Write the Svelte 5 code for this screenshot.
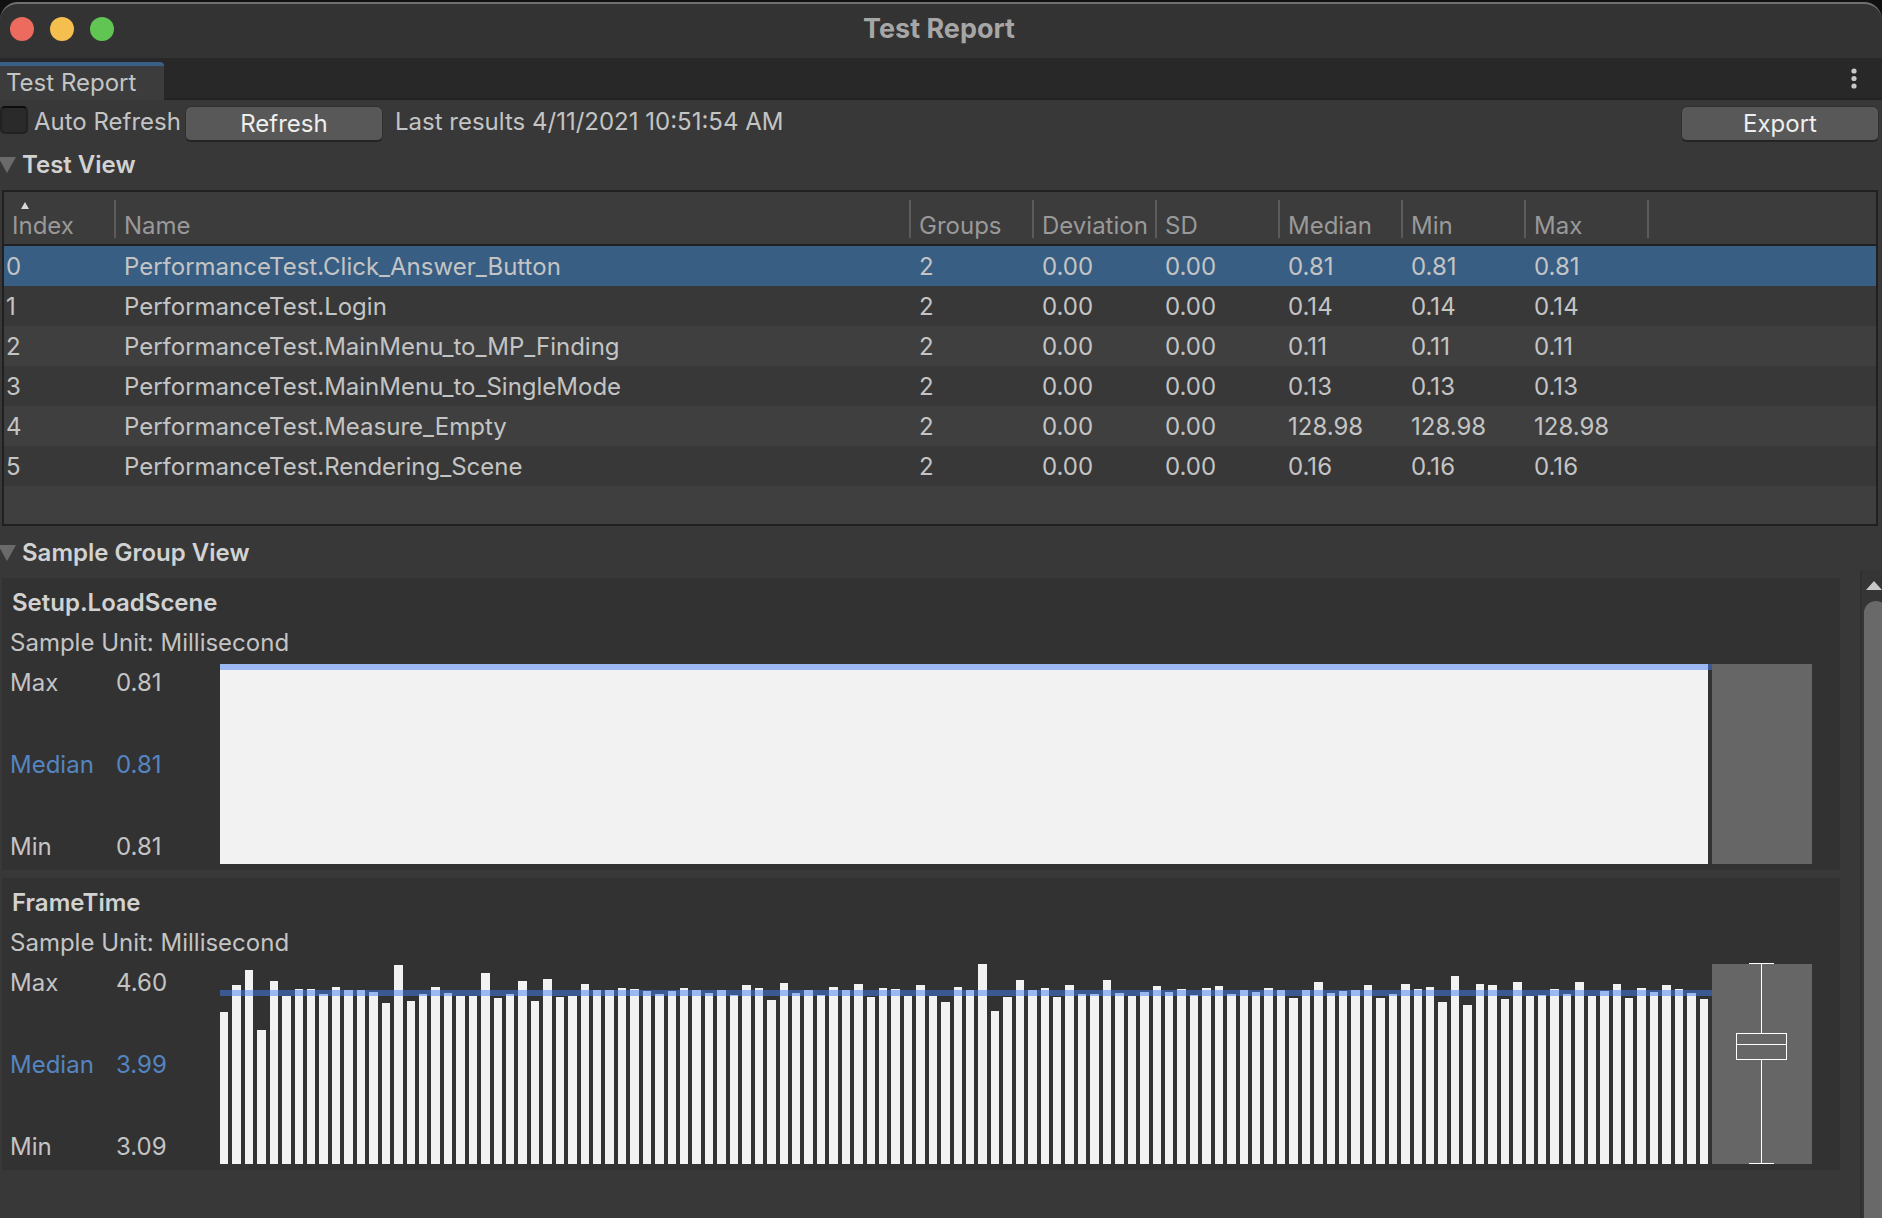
<script lang="ts">
  type Row = { name: string; groups: number; deviation: string; sd: string; median: string; min: string; max: string };

  const make = (name: string, v: string): Row => ({
    name: 'PerformanceTest.' + name, groups: 2, deviation: '0.00', sd: '0.00', median: v, min: v, max: v
  });

  const rows: Row[] = [
    make('Click_Answer_Button', '0.81'),
    make('Login', '0.14'),
    make('MainMenu_to_MP_Finding', '0.11'),
    make('MainMenu_to_SingleMode', '0.13'),
    make('Measure_Empty', '128.98'),
    make('Rendering_Scene', '0.16')
  ];

  // Bar heights of the frame time samples, out of a plot height of 200.
  const frames = [
    152, 179, 194, 134, 183, 168, 175, 175, 170, 177, 174, 174, 172, 161, 199, 163, 170, 177, 171, 168,
    168, 191, 166, 170, 183, 163, 185, 167, 168, 180, 174, 174, 176, 175, 173, 170, 173, 176, 174, 171,
    174, 169, 179, 176, 164, 181, 171, 174, 169, 177, 174, 180, 167, 176, 175, 168, 179, 168, 162, 177,
    174, 200, 153, 167, 184, 174, 176, 167, 179, 170, 170, 184, 171, 168, 172, 178, 172, 175, 169, 176,
    178, 170, 174, 172, 176, 174, 166, 174, 182, 171, 173, 174, 179, 166, 170, 180, 175, 177, 162, 188,
    159, 180, 179, 165, 182, 168, 169, 175, 170, 182, 168, 173, 180, 166, 176, 172, 179, 175, 171, 165
  ];

  const groups = [
    { name: 'Setup.LoadScene', max: '0.81', median: '0.81', min: '0.81', bars: [200], line: 0, box: false },
    { name: 'FrameTime', max: '4.60', median: '3.99', min: '3.09', bars: frames, line: 26, box: true }
  ];

  const plotWidth = 1492;

  let selected = $state(0);
  let autoRefresh = $state(false);
  let showTests = $state(true);
  let showGroups = $state(true);
</script>

<div class="window">
  <header class="titlebar">
    <div class="lights">
      <button class="light close" aria-label="Close"></button>
      <button class="light minimize" aria-label="Minimize"></button>
      <button class="light zoom" aria-label="Zoom"></button>
    </div>
    <h1>Test Report</h1>
  </header>

  <nav class="tabs">
    <button class="tab">Test Report</button>
    <button class="more" aria-label="More options">
      <svg width="6" height="22" viewBox="0 0 6 22" fill="#c8c8c8">
        <circle cx="3" cy="3" r="2.6" /><circle cx="3" cy="10.5" r="2.6" /><circle cx="3" cy="18" r="2.6" />
      </svg>
    </button>
  </nav>

  <div class="toolbar">
    <input id="auto" type="checkbox" bind:checked={autoRefresh} />
    <label for="auto">Auto Refresh</label>
    <button class="action">Refresh</button>
    <span class="results">Last results 4/11/2021 10:51:54 AM</span>
    <button class="action export">Export</button>
  </div>

  <button class="foldout" aria-expanded={showTests} onclick={() => (showTests = !showTests)}>
    <svg width="16" height="16" viewBox="0 0 16 16"><path d="M-2 0H16L7 16Z" fill="#6a6a6a" /></svg>
    Test View
  </button>

  {#if showTests}
    <div class="tests">
      <table>
        <thead>
          <tr>
            <th class="index" aria-sort="ascending">
              <div>
                <svg class="sort" width="8" height="7" viewBox="0 0 8 7"><path d="M4 0L8 7H0Z" fill="#d8d8d8" /></svg>
                Index
              </div>
            </th>
            <th><div>Name</div></th>
            {#each ['Groups', 'Deviation', 'SD', 'Median', 'Min', 'Max'] as title}
              <th class="number"><div>{title}</div></th>
            {/each}
            <th class="rest"></th>
          </tr>
        </thead>
        <tbody>
          {#each rows as row, i}
            <tr class:selected={selected === i} onclick={() => (selected = i)}>
              <td class="index">{i}</td>
              <td>{row.name}</td>
              <td>{row.groups}</td>
              <td>{row.deviation}</td>
              <td>{row.sd}</td>
              <td>{row.median}</td>
              <td>{row.min}</td>
              <td>{row.max}</td>
              <td></td>
            </tr>
          {/each}
        </tbody>
      </table>
    </div>
  {/if}

  <button class="foldout" aria-expanded={showGroups} onclick={() => (showGroups = !showGroups)}>
    <svg width="16" height="16" viewBox="0 0 16 16"><path d="M-2 0H16L7 16Z" fill="#6a6a6a" /></svg>
    Sample Group View
  </button>

  {#if showGroups}
    <div class="scroller">
      <main>
        {#each groups as group}
          {@const step = plotWidth / group.bars.length}
          <section>
            <h2>{group.name}</h2>
            <p>Sample Unit: Millisecond</p>
            <div class="sample">
              <dl>
                <div><dt>Max</dt><dd>{group.max}</dd></div>
                <div class="median"><dt>Median</dt><dd>{group.median}</dd></div>
                <div><dt>Min</dt><dd>{group.min}</dd></div>
              </dl>
              <svg class="plot" viewBox="0 0 {plotWidth} 200" preserveAspectRatio="none" shape-rendering="crispEdges">
                {#each group.bars as height, i}
                  <rect x={i * step} y={200 - height} width={step - 4} {height} fill="#f2f2f2" />
                {/each}
                <rect x="0" y={group.line} width={plotWidth} height="6" fill="#447ef4" fill-opacity="0.5" />
              </svg>
              <svg class="box" viewBox="0 0 100 200" shape-rendering="crispEdges">
                <rect width="100" height="200" fill="#666" />
                {#if group.box}
                  <path
                    d="M37 -0.5H62M49.5 0V69M24 69.5H75M24 80.5H75M24 95.5H75M24.5 70V95M74.5 69V96M49.5 96V199M37 199.5H62"
                    fill="none" stroke="#fff" />
                {/if}
              </svg>
            </div>
          </section>
        {/each}
      </main>
      <div class="track">
        <button class="up" aria-label="Scroll up">
          <svg width="16" height="9" viewBox="0 0 16 9"><path d="M8 0L16 9H0Z" fill="#c8c8c8" /></svg>
        </button>
        <div class="thumb"></div>
      </div>
    </div>
  {/if}
</div>

<style>
  :global(body) {
    margin: 0;
    background: #111;
  }

  .window {
    display: flex;
    flex-direction: column;
    min-height: 100vh;
    overflow: hidden;
    box-sizing: border-box;
    padding-top: 2px;
    background: #111;
    color: #c4c4c4;
    font: 24px/36px Inter, sans-serif;
  }

  .window > * {
    flex-shrink: 0;
  }

  button {
    margin: 0;
    padding: 0;
    border: 0;
    background: none;
    color: inherit;
    font: inherit;
  }

  svg {
    display: block;
  }

  .titlebar {
    display: grid;
    grid-template-columns: 1fr auto 1fr;
    align-items: center;
    box-sizing: border-box;
    height: 56px;
    padding: 0 14px 4px 10px;
    border-top: 2px solid #707070;
    border-radius: 18px 18px 0 0;
    background: #333;
  }

  .lights {
    display: flex;
    gap: 16px;
  }

  .light {
    width: 24px;
    height: 24px;
    border-radius: 50%;
  }

  .close {
    background: #ed6a5e;
  }

  .minimize {
    background: #f5bf4f;
  }

  .zoom {
    background: #61c554;
  }

  h1 {
    margin: 0;
    color: #a6a6a6;
    font-size: 27px;
    font-weight: 700;
    line-height: 36px;
  }

  .tabs {
    display: flex;
    justify-content: space-between;
    align-items: flex-end;
    height: 42px;
    background: linear-gradient(#282828 40px, #232323 40px);
  }

  .tab {
    box-sizing: border-box;
    height: 38px;
    padding: 0 28px 0 6px;
    border-top: 4px solid #3a5f86;
    border-top-right-radius: 4px;
    background: #3c3c3c;
    line-height: 34px;
  }

  .more {
    padding: 10px 25px;
  }

  .toolbar {
    display: flex;
    align-items: flex-start;
    height: 40px;
    padding-top: 6px;
    background: #383838;
    line-height: 32px;
  }

  .toolbar input {
    appearance: none;
    box-sizing: border-box;
    width: 28px;
    height: 28px;
    margin: 0 6px 0 0;
    border: 2px solid #212121;
    border-top-color: #0d0d0d;
    border-radius: 5px;
    background: #2a2a2a;
  }

  .toolbar input:checked {
    background: #3a5f86;
  }

  .action {
    box-sizing: border-box;
    width: 198px;
    height: 36px;
    margin-left: 4px;
    border: 1px solid #303030;
    border-bottom: 2px solid #242424;
    border-radius: 6px;
    background: #585858;
    color: #eee;
    line-height: 32px;
  }

  .results {
    margin-left: 12px;
  }

  .export {
    margin-left: auto;
    margin-right: 3px;
  }

  .foldout {
    display: flex;
    align-items: center;
    gap: 6px;
    height: 36px;
    padding-top: 2px;
    box-sizing: border-box;
    color: #d2d2d2;
    font-weight: 600;
    text-align: left;
  }

  .toolbar ~ * {
    background-color: #383838;
  }

  .tests {
    padding: 8px 4px 8px 2px;
  }

  table {
    width: 100%;
    box-sizing: border-box;
    border: 2px solid #202020;
    border-spacing: 0;
    table-layout: fixed;
    background: #3f3f3f;
  }

  table::after {
    content: '';
    display: table-row;
    height: 38px;
  }

  th {
    height: 52px;
    padding: 0;
    border-bottom: 2px solid #202020;
    background: #3c3c3c;
    color: #999;
    font-weight: 400;
    text-align: left;
  }

  th div {
    position: relative;
    box-sizing: border-box;
    height: 38px;
    margin-bottom: -2px;
    padding: 8px 0 0 8px;
    border-right: 2px solid #5c5c5c;
    line-height: 36px;
  }

  th.index {
    width: 112px;
  }

  th.number {
    width: 123px;
  }

  th.rest {
    width: 227px;
  }

  .sort {
    position: absolute;
    top: 2px;
    left: 17px;
  }

  td {
    padding: 2px 0 0 8px;
    line-height: 38px;
    height: 38px;
  }

  td.index {
    padding-left: 2px;
  }

  tbody tr:nth-child(even) {
    background: #383838;
  }

  tbody tr.selected {
    background: #385e84;
  }

  .scroller {
    display: flex;
    flex: 1 0 auto;
    gap: 20px;
  }

  main {
    flex: 1;
    display: flex;
    flex-direction: column;
    gap: 8px;
    min-width: 0;
    padding: 8px 0 0 2px;
  }

  section {
    padding: 5px 28px 6px 8px;
    background: #323232;
  }

  h2,
  p {
    margin: 0;
    font-size: 24px;
    line-height: 40px;
  }

  h2 {
    padding-left: 2px;
    color: #d2d2d2;
    font-weight: 600;
  }

  .sample {
    display: grid;
    grid-template-columns: 210px 1fr 100px;
    height: 200px;
    margin-top: 1px;
  }

  dl {
    display: flex;
    flex-direction: column;
    justify-content: space-between;
    margin: 0;
  }

  dl div {
    display: grid;
    grid-template-columns: 106px 1fr;
    padding-top: 2px;
    line-height: 34px;
  }

  dd {
    margin: 0;
  }

  .median {
    color: #5585c0;
  }

  .plot {
    width: 100%;
    height: 200px;
  }

  .box {
    width: 100px;
    height: 200px;
    overflow: visible;
  }

  .track {
    display: flex;
    flex-direction: column;
    box-sizing: border-box;
    width: 22px;
    overflow: hidden;
    border-left: 2px solid #303030;
    background: #353535;
  }

  .up {
    padding: 11px 0 11px 4px;
  }

  .thumb {
    flex: 1;
    width: 24px;
    margin-left: 2px;
    border-radius: 12px 12px 0 0;
    background: #696969;
  }
</style>
